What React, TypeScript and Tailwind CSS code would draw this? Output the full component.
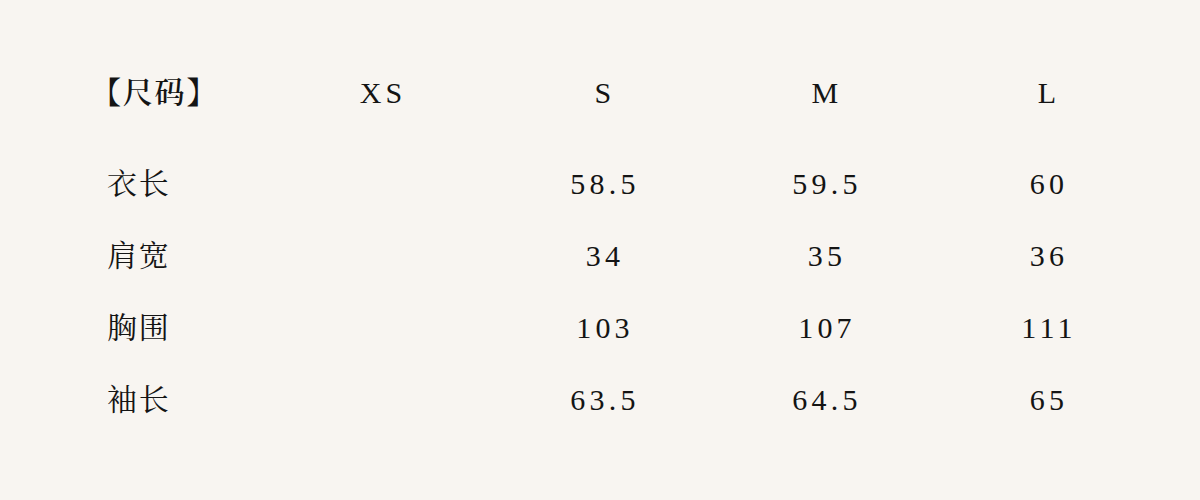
import React from 'react';

const sizes = ['XS', 'S', 'M', 'L'];

const rows: { label: string; values: string[] }[] = [
  { label: '衣长', values: ['', '58.5', '59.5', '60'] },
  { label: '肩宽', values: ['', '34', '35', '36'] },
  { label: '胸围', values: ['', '103', '107', '111'] },
  { label: '袖长', values: ['', '63.5', '64.5', '65'] },
];

const font = {
  fontFamily:
    '"Liberation Serif", "Noto Serif CJK SC", "Noto Sans CJK SC", serif',
};

export default function App() {
  return (
    <div
      className="w-[1200px] h-[500px] bg-[#f8f5f1] text-[#141414] text-[30px] tracking-[0.14em] pt-[56px] pl-[107px]"
      style={font}
    >
      {/* header row */}
      <div className="grid grid-cols-[165px_222px_222px_222px_222px] h-[72px] mb-[19px] items-center">
        <div className="font-semibold -ml-[16px] tracking-[0.06em] whitespace-nowrap">【尺码】</div>
        {sizes.map((s) => (
          <div key={s} className="text-center">
            {s}
          </div>
        ))}
      </div>

      {rows.map((r) => (
        <div
          key={r.label}
          className="grid grid-cols-[165px_222px_222px_222px_222px] h-[72px] items-center"
        >
          <div className="tracking-[0.06em]">{r.label}</div>
          {r.values.map((v, i) => (
            <div key={i} className="text-center">
              {v}
            </div>
          ))}
        </div>
      ))}
    </div>
  );
}
